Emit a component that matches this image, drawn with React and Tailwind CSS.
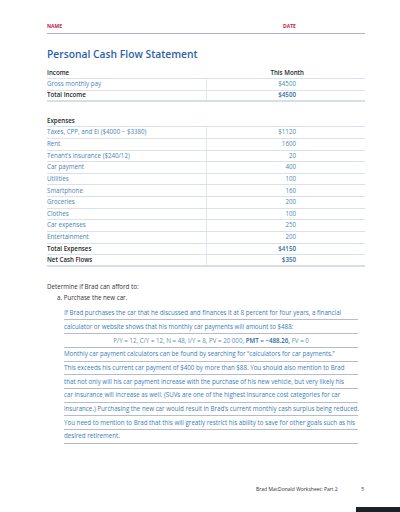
import React from 'react';

const expenses = [
  ['Taxes, CPP, and EI ($4000 − $3380)', '$1120'],
  ['Rent', '1600'],
  ["Tenant’s insurance ($240/12)", '20'],
  ['Car payment', '400'],
  ['Utilities', '100'],
  ['Smartphone', '160'],
  ['Groceries', '200'],
  ['Clothes', '100'],
  ['Car expenses', '250'],
  ['Entertainment', '200'],
];

const answerLines = [
  'If Brad purchases the car that he discussed and finances it at 8 percent for four years, a financial',
  'calculator or website shows that his monthly car payments will amount to $488:',
  null,
  'Monthly car payment calculators can be found by searching for “calculators for car payments.”',
  'This exceeds his current car payment of $400 by more than $88. You should also mention to Brad',
  'that not only will his car payment increase with the purchase of his new vehicle, but very likely his',
  'car insurance will increase as well. (SUVs are one of the highest insurance cost categories for car',
  'insurance.) Purchasing the new car would result in Brad’s current monthly cash surplus being reduced.',
  'You need to mention to Brad that this will greatly restrict his ability to save for other goals such as his',
  'desired retirement.',
];

function Row({ label, value, bold, last }) {
  return (
    <div className={`grid grid-cols-[159px_1fr] h-[11.64px] items-center border-b ${last ? 'border-b-2 border-[#d8dee7]' : 'border-[#dbe1ea]'}`}>
      <div className={bold ? 'font-semibold text-[#1f1f1f]' : 'text-[#4a82b4]'}>{label}</div>
      <div className={`h-full flex items-center justify-end pr-[69px] border-l border-[#e1e6ee] ${bold ? 'font-semibold text-[#2f6d9e]' : 'text-[#4c8ab0]'}`}>
        {value}
      </div>
    </div>
  );
}

export default function App() {
  return (
    <div className="relative w-[400px] h-[512px] bg-white overflow-hidden" style={{ fontFamily: '"Open Sans", sans-serif' }}>
      <div className="pl-[47px] pr-[35px]">
        {/* name / date */}
        <div className="h-[34px] flex items-end pb-[3px] border-b border-[#aeb0cc] text-[5px] font-bold text-[#c4223d]">
          <span className="w-[236px]">NAME</span>
          <span>DATE</span>
        </div>

        <h1 className="mt-[12px] text-[10.3px] font-semibold text-[#2e5fa8] leading-[16px]">Personal Cash Flow Statement</h1>

        <div className="mt-[6px] text-[6.2px] leading-none">
          <div className="grid grid-cols-[159px_1fr] h-[11px] items-center border-b border-[#dbe1ea] font-semibold text-[#1f1f1f]">
            <div>Income</div>
            <div className="text-right pr-[61px]">This Month</div>
          </div>
          <Row label="Gross monthly pay" value="$4500" />
          <Row label="Total Income" value="$4500" bold last />

          <div className="mt-[14px] h-[11px] flex items-center border-b border-[#dbe1ea] font-semibold text-[#1f1f1f]">Expenses</div>
          {expenses.map(([l, v]) => (
            <Row key={l} label={l} value={v} />
          ))}
          <Row label="Total Expenses" value="$4150" bold />
          <Row label="Net Cash Flows" value="$350" bold last />
        </div>

        <div className="mt-[14px] text-[6.2px] text-[#333] leading-[11px]">Determine if Brad can afford to:</div>
        <div className="pl-[10px] text-[6.2px] text-[#333] leading-[11px]">a. Purchase the new car.</div>

        <div className="ml-[17px] mr-[7px] mt-[4px] text-[6.2px] text-[#3b7cb5]">
          {answerLines.map((line, i) =>
            line === null ? (
              <div key={i} className="h-[13.7px] flex items-end justify-center pb-[2px] border-b border-[#b7bccb] text-[#5d8db9] whitespace-nowrap">
                <span>
                  P/Y = 12, C/Y = 12, N = 48, I/Y = 8, PV = 20 000,{' '}
                  <b className="font-semibold text-[#2f68a0]">PMT = −488.26,</b> FV = 0
                </span>
              </div>
            ) : (
              <div key={i} className="h-[13.7px] flex items-end pb-[2px] border-b border-[#b7bccb] whitespace-nowrap">
                {line}
              </div>
            )
          )}
        </div>

        <div className="mt-[42px] flex text-[5px] text-[#333]">
          <span className="ml-[209px]">Brad MacDonald Worksheet: Part 2</span>
          <span className="ml-auto mr-[1px]">5</span>
        </div>
      </div>

      <div className="absolute right-0 bottom-0 w-[44px] h-[5px] bg-[#1c2126]" />
    </div>
  );
}
